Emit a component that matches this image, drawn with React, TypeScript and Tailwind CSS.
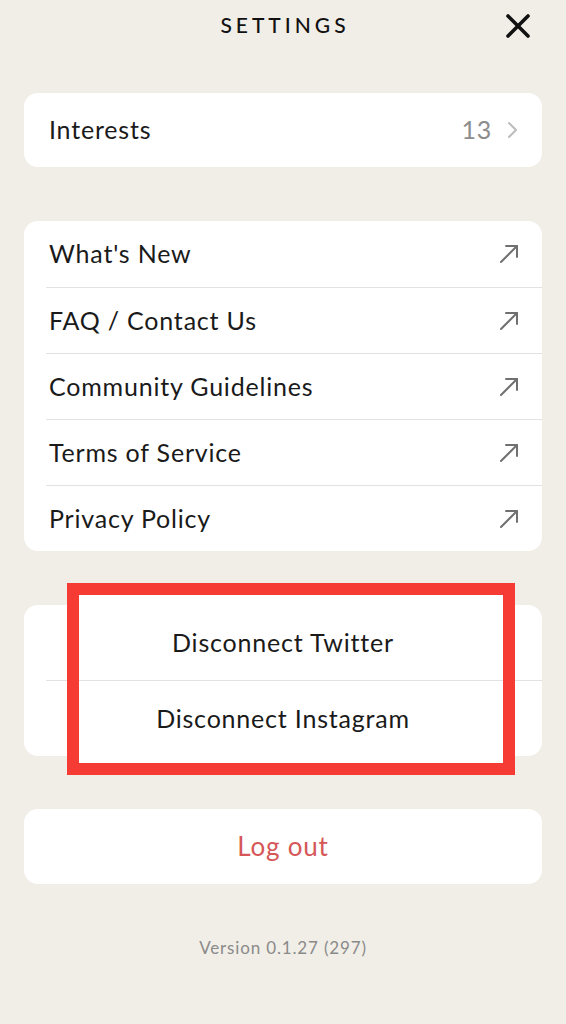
import React from "react";

const links = [
  "What's New",
  "FAQ / Contact Us",
  "Community Guidelines",
  "Terms of Service",
  "Privacy Policy",
];

function ArrowUpRight() {
  return (
    <svg width="22" height="22" viewBox="0 0 22 22" fill="none" stroke="#707070" strokeWidth="2" strokeLinecap="round" strokeLinejoin="round">
      <path d="M3 19 L19 3" />
      <path d="M8 3 H19 V14" />
    </svg>
  );
}

export default function App() {
  return (
    <div
      className="w-[566px] h-[1024px] bg-[#f1eee7] text-[#1a1a1a] px-6 tracking-[0.05em]"
      style={{ fontFamily: "Lato, 'Noto Sans', sans-serif" }}
    >
      {/* header */}
      <div className="relative h-[50px] flex items-center justify-center">
        <h1 className="text-[21px] font-medium tracking-[4px] pl-[4px] text-[#111]">SETTINGS</h1>
        <button className="absolute right-[10px] top-[12px]">
          <svg width="28" height="28" viewBox="0 0 28 28" stroke="#111" strokeWidth="3.6" strokeLinecap="round">
            <path d="M4 4 L24 24" />
            <path d="M24 4 L4 24" />
          </svg>
        </button>
      </div>

      {/* interests */}
      <div className="mt-[43px] bg-white rounded-[14px] h-[74px] flex items-center pl-[25px] pr-[24px]">
        <span className="text-[25px] flex-1">Interests</span>
        <span className="text-[25px] text-[#8d8d8d] mr-[14px]">13</span>
        <svg width="12" height="18" viewBox="0 0 12 18" fill="none" stroke="#bcbcbc" strokeWidth="2" strokeLinecap="round" strokeLinejoin="round">
          <path d="M3 2 L10 9 L3 16" />
        </svg>
      </div>

      {/* links */}
      <div className="mt-[54px] bg-white rounded-[14px] pl-[22px]">
        {links.map((l, i) => (
          <div
            key={l}
            className={`h-[66px] flex items-center pr-[22px] ${i > 0 ? "border-t border-[#e2e2e2]" : ""}`}
          >
            <span className="text-[25px] flex-1 pl-[3px]">{l}</span>
            <ArrowUpRight />
          </div>
        ))}
      </div>

      {/* disconnect */}
      <div className="relative mt-[54px]">
        <div className="bg-white rounded-[14px] pl-[22px]">
          <div className="relative z-20 h-[75px] flex items-center justify-center pr-[22px]">
            <span className="text-[25px]">Disconnect Twitter</span>
          </div>
          <div className="relative z-20 h-[76px] flex items-center justify-center border-t border-[#e2e2e2] pr-[22px]">
            <span className="text-[25px]">Disconnect Instagram</span>
          </div>
        </div>
        <div className="absolute z-10 left-[43px] top-[-22px] w-[448px] h-[192px] bg-white" />
        <div className="absolute z-30 left-[43px] top-[-22px] w-[448px] h-[192px] border-[12px] border-[#f53b33]" />
      </div>

      {/* logout */}
      <div className="mt-[53px] bg-white rounded-[14px] h-[75px] flex items-center justify-center">
        <span className="text-[26px] text-[#d55757]">Log out</span>
      </div>

      <p className="mt-[51px] text-center text-[17px] text-[#8a8a8a] tracking-[0.05em]">Version 0.1.27 (297)</p>
    </div>
  );
}
